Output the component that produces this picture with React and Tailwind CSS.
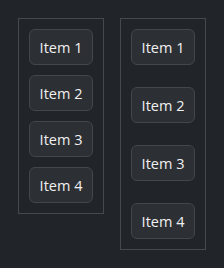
import React from "react";

const Item = ({ label }) => (
  <div className="w-16 h-9 flex items-center justify-center rounded-md border border-[#43464b] bg-[#2c2f33] text-[14.5px] text-[#f0f0f0] pt-px">
    {label}
  </div>
);

const Column = ({ gap }) => (
  <div className={`flex flex-col p-2.5 border border-[#45484d] ${gap}`}>
    {["Item 1", "Item 2", "Item 3", "Item 4"].map((label) => (
      <Item key={label} label={label} />
    ))}
  </div>
);

export default function App() {
  return (
    <div
      className="w-[224px] h-[268px] bg-[#212428] flex items-start gap-4 p-[18px]"
      style={{ fontFamily: '"Open Sans", "Noto Sans", sans-serif' }}
    >
      <Column gap="gap-2.5" />
      <Column gap="gap-[22px]" />
    </div>
  );
}
